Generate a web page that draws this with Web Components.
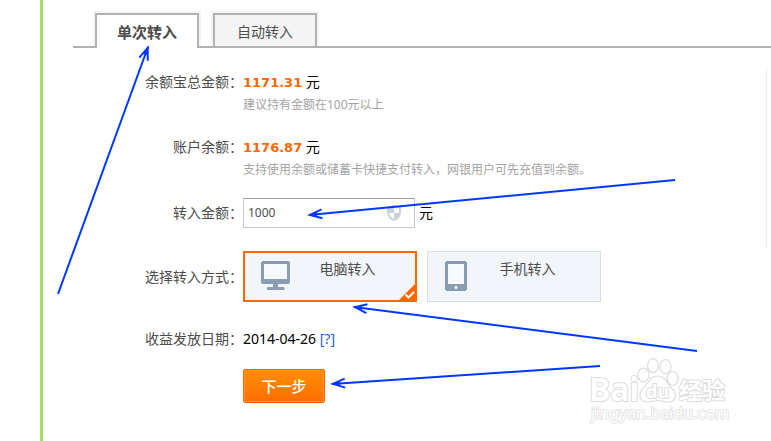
<!DOCTYPE html>
<html lang="zh-CN">
<head>
<meta charset="utf-8">
<title>转入</title>
<style>
html{height:100%}
body{margin:0;min-height:100%;display:flex;background:#fff;color:#000;font:14px/22px "Noto Sans","Noto Sans CJK SC",sans-serif;overflow:hidden}
</style>
</head>
<body>
<transfer-page></transfer-page>
<script>
function define(name, html) {
  const template = document.createElement('template');
  template.innerHTML = html;
  customElements.define(name, class extends HTMLElement {
    constructor() {
      super();
      this.attachShadow({mode: 'open'}).append(template.content.cloneNode(true));
    }
  });
}

define('tab-item', `
<style>
:host{display:block;margin-bottom:-2px}
button{box-sizing:border-box;font:inherit;color:#4d4d4d;background:#f4f4f4;border:2px solid #b2b2b2;border-bottom:0;box-shadow:0 -2px 0 #f4f4f4,2px -2px 0 #f4f4f4,-2px -2px 0 #f4f4f4;width:104px;height:33px;padding:2px 0 0;margin:0 0 2px;display:block}
:host([selected]) button{background:#fff;height:35px;margin:0;padding:0;font-size:15px;font-weight:700}
</style>
<button type="button"><slot></slot></button>`);

define('tab-bar', `
<style>
:host{display:flex;gap:14px;padding:13px 22px 0;border-bottom:2px solid #b2b2b2}
</style>
<slot></slot>`);

define('form-row', `
<style>
:host{display:grid;grid-template-columns:98px minmax(0,1fr)}
.label{color:#4d4d4d;text-align:right;white-space:nowrap;align-self:start}
:host([middle]) .label{align-self:center}
</style>
<div class="label"><slot name="label"></slot></div>
<div><slot></slot></div>`);

define('money-value', `
<style>
:host{display:block}
b{color:#f60;font:bold 13px/1 "DejaVu Sans",sans-serif}
p{margin:0;font-size:12px;line-height:24px;color:#a3a3a3}
</style>
<div><b><slot></slot></b> 元</div>
<p><slot name="hint"></slot></p>`);

define('amount-field', `
<style>
:host{display:grid;grid-template-columns:98px 172px auto;align-items:center;justify-content:start}
label{color:#4d4d4d;text-align:right}
.box{display:flex;align-items:center;box-sizing:border-box;height:30px;border:1px solid #c8c8c8;border-top-color:#9b9b9b;padding:0 13px 0 4px}
input{flex:1;min-width:0;border:0;outline:0;padding:0;background:none;color:#4d4d4d;font:12px/22px "Noto Sans",sans-serif}
.unit{padding-left:4px}
svg{display:block}
</style>
<label for="amount">转入金额：</label>
<span class="box"><input id="amount" type="text" value="1000">
<svg width="14" height="16" viewBox="0 0 14 16"><path d="M7 1 13 3V8Q12 13 7 15 2 13 1 8V3Z" fill="#fff" stroke="#c6d3dd" stroke-width="2"/><path d="M7 1V8H1V3ZM7 8H13Q12 13 7 15Z" fill="#c6d3dd"/></svg></span>
<span class="unit">元</span>`);

define('method-picker', `
<style>
:host{display:block}
fieldset{border:0;margin:0;padding:0;min-width:0;display:flex;gap:10px}
label{position:relative;box-sizing:border-box;width:174px;height:51px;padding:9px 12px 0 17px;border:1px solid #ddd;background:#f2f5fa;color:#4d4d4d;display:flex;align-items:flex-start}
label:has(input:checked){border:2px solid #f60;padding:8px 11px 0 16px}
input{position:absolute;opacity:0;margin:0}
.name{flex:1;text-align:center;line-height:16px}
.tick{display:none;position:absolute;right:0;bottom:0}
label:has(input:checked) .tick{display:block}
svg{display:block}
</style>
<fieldset aria-label="选择转入方式">
<label><input type="radio" name="m" checked>
<svg width="30" height="30" viewBox="0 0 30 30"><rect y="0" width="29" height="23" rx="2" fill="#8b9db0"/><rect x="3" y="3" width="23" height="15" fill="#f5f8fc"/><path d="M12 23h5v3h5.500q1 0 1 1v2H6v-2q0-1 1-1h5z" fill="#8b9db0"/></svg>
<span class="name">电脑转入</span>
<svg class="tick" width="16" height="16" viewBox="0 0 16 16"><path d="M16 0V16H0Z" fill="#f60"/><path d="M6.500 10.500 9.500 13.500 15 8" fill="none" stroke="#fff" stroke-width="2"/></svg></label>
<label><input type="radio" name="m">
<svg width="22" height="30" viewBox="0 0 22 30"><rect width="22" height="30" rx="2" fill="#8b9db0"/><rect x="3" y="3" width="16" height="20" fill="#f5f8fc"/><circle cx="11" cy="26.500" r="1.600" fill="#f5f8fc"/></svg>
<span class="name">手机转入</span></label>
</fieldset>`);

define('submit-button', `
<style>
:host{display:block}
button{display:block;box-sizing:border-box;width:82px;height:34px;padding:0;border:1px solid #f26200;border-radius:2px;box-shadow:inset 0 0 0 1px #ff9a1f;background:linear-gradient(#ff9000,#ff6c00);color:#fff;font:500 15px/22px "Noto Sans CJK SC",sans-serif}
</style>
<button type="submit"><slot></slot></button>`);

define('pointer-arrows', `
<style>
:host{position:absolute;left:0;top:0;pointer-events:none}
svg{display:block}
</style>
<svg width="771" height="441" viewBox="0 0 771 441" fill="none" stroke="#0038ff" stroke-width="2">
<defs><marker id="head" markerUnits="userSpaceOnUse" markerWidth="18" markerHeight="14" refX="15" refY="7" orient="auto"><path d="M7 4.500 16 7 7 9.500Z" fill="#0038ff" stroke="none"/><path d="M2 2.500 14 7 2 11.500" fill="none" stroke="#0038ff" stroke-width="2"/></marker></defs>
<path d="M58 294 148 47" marker-end="url(#head)"/><path d="M675 180 309 215" marker-end="url(#head)"/><path d="M697 351 354 307" marker-end="url(#head)"/><path d="M600 366 332 384" marker-end="url(#head)"/>
</svg>`);

define('site-watermark', `
<style>
:host{position:absolute;left:586px;top:354px;pointer-events:none}
svg{display:block}
text{font-family:"Noto Sans","Noto Sans CJK SC",sans-serif;font-weight:700;paint-order:stroke;stroke-linejoin:round}
.url{font-weight:400}
</style>
<svg width="150" height="76" viewBox="0 0 150 76" fill="#fff" stroke="#dcdcdc" stroke-width="2">
<text x="3" y="47" font-size="32">Bai</text>
<g stroke-width="1.200"><ellipse cx="57.500" cy="21" rx="5.500" ry="7"/><ellipse cx="67" cy="11.700" rx="5.300" ry="7"/><ellipse cx="79.500" cy="12.700" rx="5.500" ry="7"/><ellipse cx="86.700" cy="24.500" rx="5.500" ry="7"/>
<path d="M71.500 22C80 22 81 30 85.500 34 92 40 90 48 82 48 77 48 75 46.500 71.500 46.500 68 46.500 66 48 62 48 53 48 52 40 57 34.500 62 31 63 22 71.500 22Z"/></g>
<text x="60" y="44" font-size="18">du</text>
<text x="93" y="45" font-size="23">经验</text>
<text class="url" x="5" y="65" font-size="16" stroke-width="1.500">jingyan.baidu.com</text>
</svg>`);

define('transfer-page', `
<style>
:host{display:flex;flex:1;min-width:0}
.edge{flex:none;width:3px;margin-left:40px;background:#a6dc62}
main{flex:1;min-width:0;margin-left:30px}
.body{display:flex;justify-content:space-between;padding:20px 4px 0 72px}
form{flex:1;min-width:0;padding-top:3px;display:flex;flex-direction:column}
.rule{width:1px;height:180px;background:#eee}
.balance{margin-top:19px}.amount{margin-top:16px}.method{margin-top:23px}.date{margin-top:26px}.submit{margin-top:19px}
a{color:#1f5fbf;text-decoration:none}
</style>
<div class="edge"></div>
<main>
<tab-bar><tab-item selected>单次转入</tab-item><tab-item>自动转入</tab-item></tab-bar>
<div class="body">
<form>
<form-row><span slot="label">余额宝总金额：</span><money-value>1171.31<span slot="hint">建议持有金额在100元以上</span></money-value></form-row>
<form-row class="balance"><span slot="label">账户余额：</span><money-value>1176.87<span slot="hint">支持使用余额或储蓄卡快捷支付转入，网银用户可先充值到余额。</span></money-value></form-row>
<amount-field class="amount"></amount-field>
<form-row class="method" middle><span slot="label">选择转入方式：</span><method-picker></method-picker></form-row>
<form-row class="date"><span slot="label">收益发放日期：</span>2014-04-26 <a href="#">[?]</a></form-row>
<form-row class="submit"><submit-button>下一步</submit-button></form-row>
</form>
<div class="rule"></div>
</div>
</main>
<site-watermark></site-watermark>
<pointer-arrows></pointer-arrows>`);
</script>
</body>
</html>
